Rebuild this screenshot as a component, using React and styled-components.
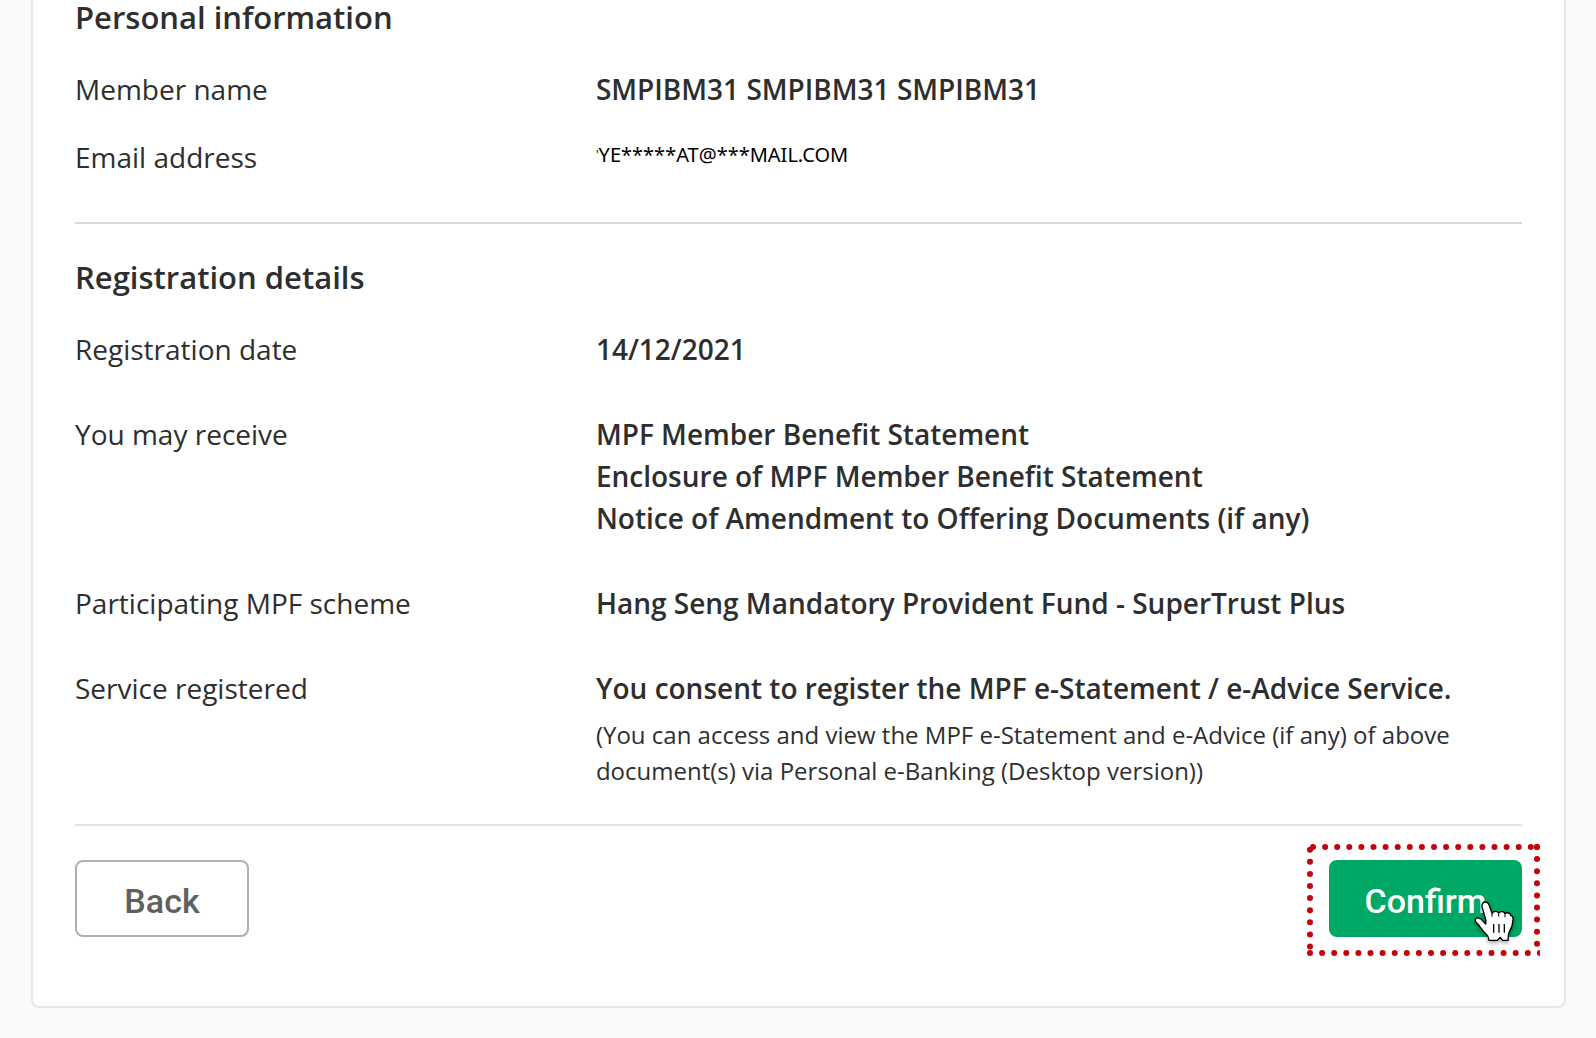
import React from "react";
import styled, { createGlobalStyle, css } from "styled-components";

const GlobalStyle = createGlobalStyle`
  * { box-sizing: border-box; }
  body {
    margin: 0;
    background: #fafafa;
    color: #2e2e2e;
    font-family: "Open Sans", "Noto Sans", sans-serif;
  }
`;

const Page = styled.div`
  padding: 0 30px 30px 31px;
`;

const Card = styled.main`
  padding: 0 42px 69px;
  background: #fff;
  border: 2px solid #e6e6e6;
  border-top: 0;
  border-radius: 0 0 8px 8px;
`;

const Section = styled.section`
  padding-top: ${(p) => (p.$first ? "0" : "36px")};
  padding-bottom: ${(p) => (p.$last ? "35px" : "44px")};
  border-bottom: 2px solid ${(p) => (p.$last ? "#e3e3e3" : "#d8d8d8")};
`;

const Heading = styled.h2`
  margin: 0 0 34px;
  font-size: 31px;
  line-height: 34px;
  font-weight: 600;
`;

const Details = styled.dl`
  display: flex;
  flex-direction: column;
  gap: ${(p) => (p.$loose ? "43px" : "26px")};
  margin: 0;
`;

const Row = styled.div`
  display: grid;
  grid-template-columns: 36% 1fr;
`;

const Label = styled.dt`
  font-size: 28px;
  line-height: 42px;
`;

const Value = styled.dd`
  margin: 0;
  font-size: 28px;
  line-height: 42px;
  font-weight: 600;
`;

const Email = styled.span`
  display: block;
  color: #000;
  font-family: "Noto Sans", "Open Sans", sans-serif;
  font-size: 20px;
  line-height: 38px;
  font-weight: 400;
`;

const Mark = styled.span`
  font-size: 12px;
  vertical-align: top;
`;

const Line = styled.div``;

const Note = styled.p`
  margin: 8px 0 0;
  font-size: 24px;
  line-height: 36px;
  font-weight: 400;
`;

const Actions = styled.div`
  display: flex;
  justify-content: space-between;
  padding-top: 34px;
`;

const Button = styled.button`
  display: block;
  height: 77px;
  padding: 4px 0 0;
  border-radius: 8px;
  font-family: Roboto, "Open Sans", sans-serif;
  font-size: 34px;
  line-height: 40px;
  font-weight: 500;
  cursor: pointer;
  ${(p) =>
    p.$primary
      ? css`
          width: 193px;
          border: 0;
          background: #00a865;
          color: #fff;
        `
      : css`
          width: 174px;
          border: 2px solid #b0b0b0;
          background: #fff;
          color: #606060;
        `}
`;

const ConfirmArea = styled.div`
  position: relative;
`;

const Frame = styled.svg`
  position: absolute;
  top: -16px;
  left: -22px;
  pointer-events: none;
`;

const Pointer = styled.svg`
  position: absolute;
  top: 38px;
  left: 142px;
  pointer-events: none;
  filter: drop-shadow(0 2px 2px rgba(0, 0, 0, 0.35));
`;

function DottedFrame() {
  return (
    <Frame width="233" height="112" viewBox="0 0 233 112" aria-hidden="true">
      <g stroke="#c4040b" strokeWidth="6" strokeLinecap="round" strokeDasharray="0 12.1" fill="none">
        <path d="M6 3H225" />
        <path d="M3 5.7V103" />
        <path d="M230 3V101" />
        <path d="M3 109H234" />
      </g>
      <g fill="#c4040b">
        <circle cx="230" cy="3" r="3" />
      </g>
    </Frame>
  );
}

function HandPointer() {
  return (
    <Pointer width="46" height="48" viewBox="573 264 138 144" aria-hidden="true">
      <path
        d="M606 290C605 281 610 276 616 276C623 276 626 281 628 287L636 310C641 302 652 303 656 309C662 303 672 304 675 310C682 306 692 309 692 317C698 317 700 322 699 330C698 348 692 360 687 368C685 374 684 382 684 391L668 391L661 382L652 391H627C626 383 624 377 619 373C609 365 602 353 597 346C591 340 584 335 586 328C590 320 603 325 607 331L617 342L618 332Z"
        fill="#fff"
        stroke="#000"
        strokeWidth="4"
        strokeLinejoin="round"
      />
      <path d="M636 310V320M656 309V320M675 310V322" stroke="#000" strokeWidth="3" />
      <path d="M641 342V368M657 342V368M673 342V368" stroke="#000" strokeWidth="4" />
    </Pointer>
  );
}

const statements = [
  "MPF Member Benefit Statement",
  "Enclosure of MPF Member Benefit Statement",
  "Notice of Amendment to Offering Documents (if any)",
];

export default function App() {
  return (
    <>
      <GlobalStyle />
      <Page>
        <Card>
          <Section $first>
            <Heading>Personal information</Heading>
            <Details>
              <Row>
                <Label>Member name</Label>
                <Value>SMPIBM31 SMPIBM31 SMPIBM31</Value>
              </Row>
              <Row>
                <Label>Email address</Label>
                <Value>
                  <Email><Mark>'</Mark>YE*****AT@***MAIL.COM</Email>
                </Value>
              </Row>
            </Details>
          </Section>
          <Section $last>
            <Heading>Registration details</Heading>
            <Details $loose>
              <Row>
                <Label>Registration date</Label>
                <Value>14/12/2021</Value>
              </Row>
              <Row>
                <Label>You may receive</Label>
                <Value>
                  {statements.map((name) => (
                    <Line key={name}>{name}</Line>
                  ))}
                </Value>
              </Row>
              <Row>
                <Label>Participating MPF scheme</Label>
                <Value>Hang Seng Mandatory Provident Fund - SuperTrust Plus</Value>
              </Row>
              <Row>
                <Label>Service registered</Label>
                <Value>
                  You consent to register the MPF e-Statement / e-Advice Service.
                  <Note>
                    (You can access and view the MPF e-Statement and e-Advice (if any) of above
                    document(s) via Personal e-Banking (Desktop version))
                  </Note>
                </Value>
              </Row>
            </Details>
          </Section>
          <Actions>
            <Button type="button">Back</Button>
            <ConfirmArea>
              <Button type="button" $primary>Confirm</Button>
              <DottedFrame />
              <HandPointer />
            </ConfirmArea>
          </Actions>
        </Card>
      </Page>
    </>
  );
}
